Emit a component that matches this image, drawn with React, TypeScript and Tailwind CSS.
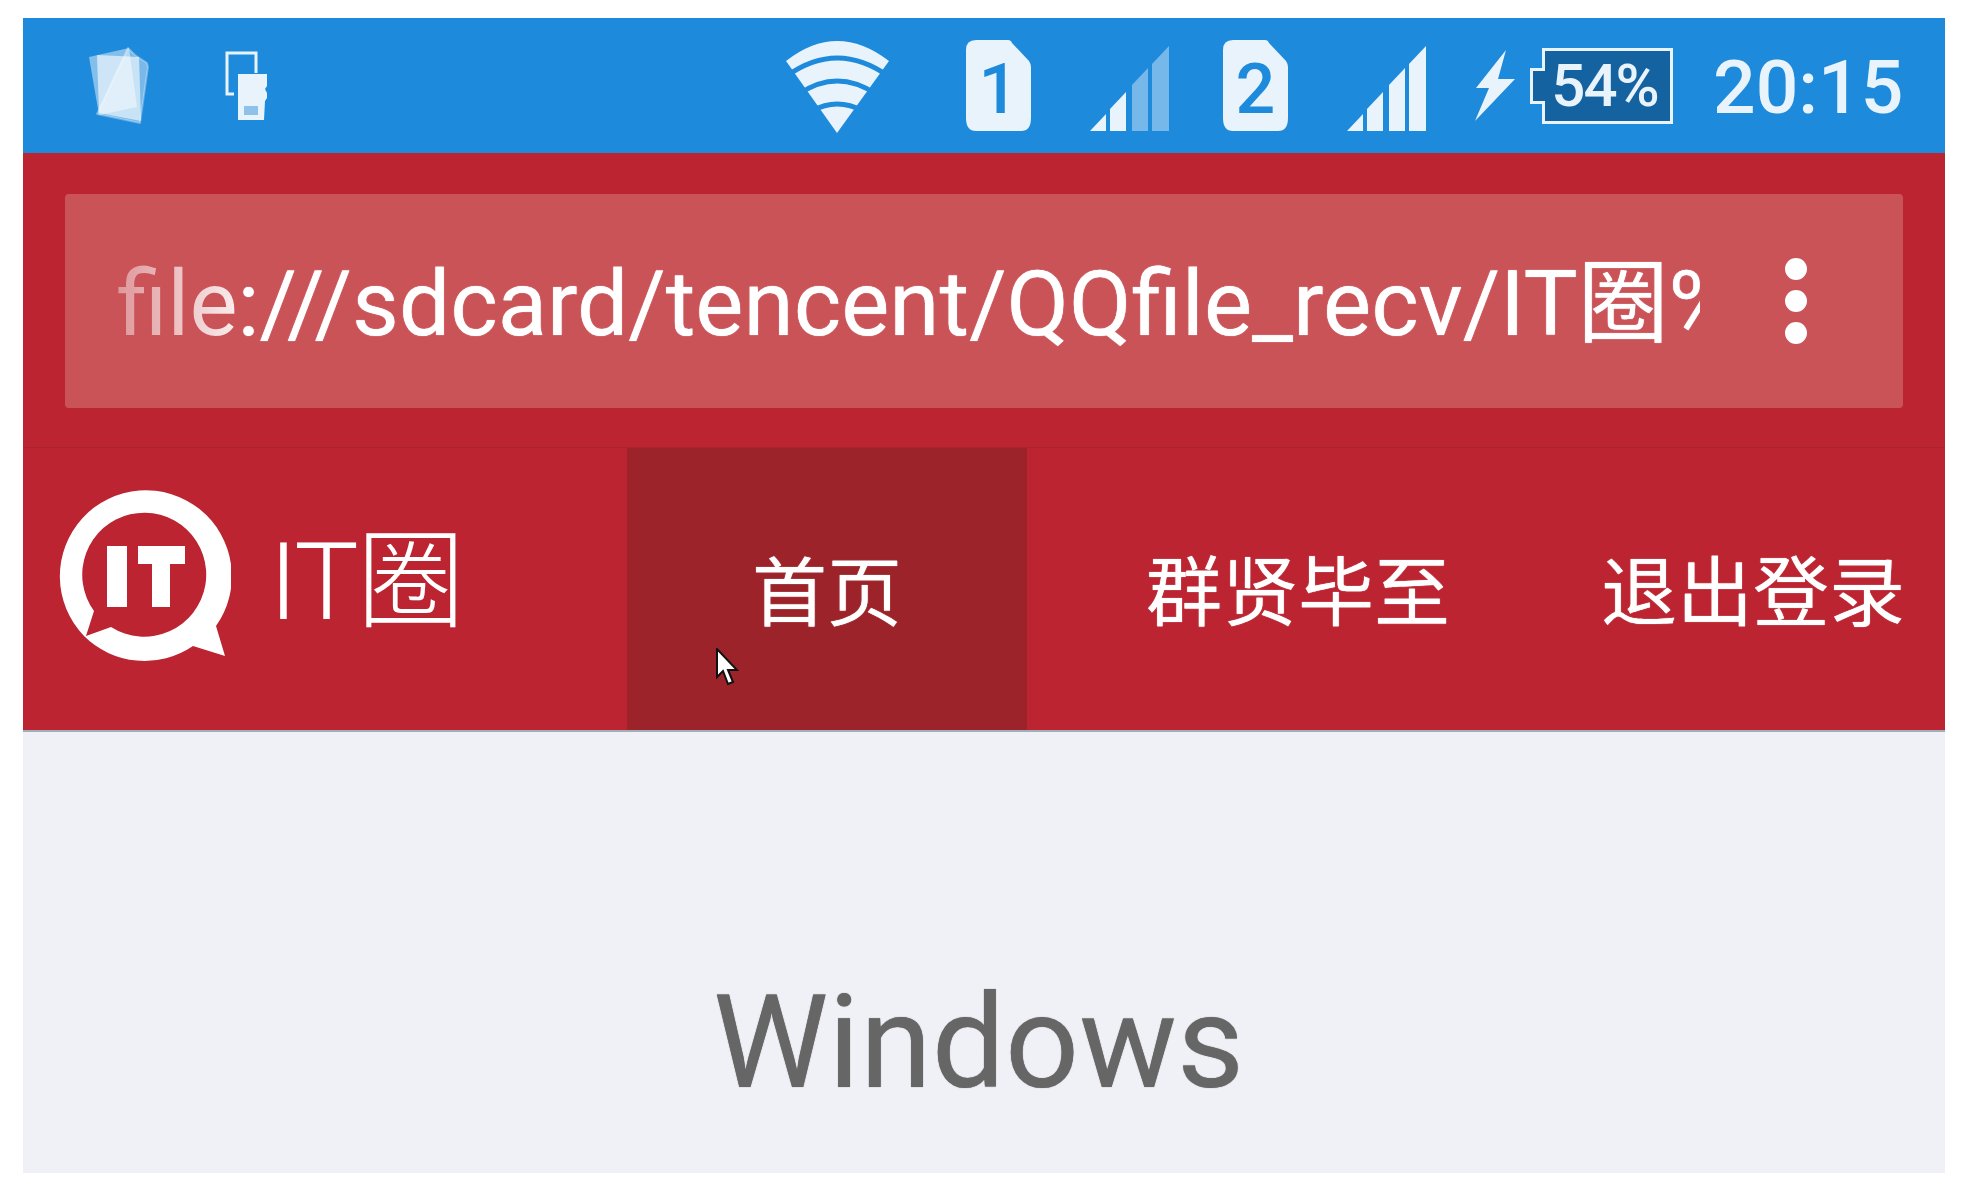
import React from 'react';

const sans = 'font-["Roboto","Noto_Sans_CJK_SC",sans-serif]';

const Cards = () => (
  <svg width="63" height="77" viewBox="0 0 63 77" className="shrink-0">
    <path d="M41 1 L48 8 L60 16 L61 20 L53 76 L10 67Z" fill="#fff" fillOpacity="0.4" stroke="#fff" strokeOpacity="0.3" strokeLinejoin="round" strokeWidth="2" />
    <path d="M2 10 L42 1 L50 60 L12 68Z" fill="#fff" fillOpacity="0.45" strokeLinejoin="round" />
    <path d="M10 8 L52 10 L54 74 L12 66Z" fill="#fff" fillOpacity="0.6" />
  </svg>
);

const DeviceCard = () => (
  <svg width="44" height="69" viewBox="0 0 44 69" className="shrink-0">
    <path d="M31 22 V2 H2 V43 H9" fill="none" stroke="#e8f3fb" strokeWidth="3" />
    <path d="M13 23 H42 V35 L40 38 L42 42 V47 L40 50 L39 69 H13Z" fill="#e8f3fb" />
    <rect x="19" y="55" width="14" height="9" fill="#8fc2ea" />
  </svg>
);

const Wifi = () => (
  <svg width="104" height="92" viewBox="0 0 104 92" className="shrink-0">
    <path d="M0 20 Q51 -20 103 20 L51 92Z" fill="#e8f3fb" strokeLinejoin="round" />
    <path d="M-2 37 Q51 -3 105 37" fill="none" stroke="#1e8adb" strokeWidth="5" />
    <path d="M13 53 Q51 27 90 53" fill="none" stroke="#1e8adb" strokeWidth="5" />
    <path d="M26 70 Q51 56 77 70" fill="none" stroke="#1e8adb" strokeWidth="5" />
  </svg>
);

const Sim = ({ n }: { n: string }) => (
  <div className="relative w-[65px] h-[91px] shrink-0">
    <svg width="65" height="91" viewBox="0 0 65 91" className="absolute inset-0">
      <path d="M10 0 H42 Q45 0 46 3 L63 21 Q65 24 65 27 V78 Q65 91 55 91 H10 Q0 91 0 78 V10 Q0 0 10 0Z" fill="#e8f3fb" />
    </svg>
    <span className={`absolute inset-0 flex items-center justify-center pt-[6px] text-[70px] leading-none text-[#1e8adb] font-medium ${sans}`}>
      {n}
    </span>
  </div>
);

const Signal = ({ dim }: { dim?: boolean }) => {
  const far = dim ? '#76b8ea' : '#e8f3fb';
  return (
    <svg width="80" height="85" viewBox="0 0 80 85" className="shrink-0">
      <path d="M0 85 L16 68 V85Z" fill="#e8f3fb" />
      <path d="M20 85 V63 L36 46 V85Z" fill="#e8f3fb" />
      <path d="M42 85 V39 L58 22 V85Z" fill={far} />
      <path d="M62 85 V18 L79 0 V85Z" fill={far} />
    </svg>
  );
};

const Bolt = () => (
  <svg width="40" height="71" viewBox="0 0 40 71" className="shrink-0">
    <path d="M31 0 L1 38 H14 L0 71 L40 29 H23Z" fill="#e8f3fb" />
  </svg>
);

const Battery = () => (
  <div className="relative w-[143px] h-[76px] shrink-0 pl-[12px]">
    <div className={`h-full w-full border-[3px] border-[#e8f3fb] bg-[#14629f] flex items-center justify-center pr-[6px] text-[60px] leading-none text-[#e8f3fb] font-medium tracking-[-2px] ${sans}`}>
      54%
    </div>
    <div className="absolute left-0 top-[20px] h-[36px] w-[15px] border-[3px] border-r-0 border-[#e8f3fb] bg-[#14629f]" />
  </div>
);

const LogoMark = () => (
  <svg width="172" height="172" viewBox="0 0 172 172" className="shrink-0">
    <path
      fillRule="evenodd"
      fill="#fff"
      d="M157 137 L166 167 L134 157 A86 86 0 0 1 25 147 A86 86 0 1 1 157 137Z M35 122 L27 147 L52 138 A62 62 0 1 0 35 122Z"
    />
    <path d="M48 57 H68 V118 H48Z M79 57 H126 V75 H111 V118 H93 V75 H79Z" fill="#fff" />
  </svg>
);

const Cursor = () => (
  <svg width="24" height="38" viewBox="0 0 24 38" className="absolute left-[88px] top-[200px]">
    <path d="M2 1 V29 L8 23 L13 36 L18 34 L13 22 L22 22Z" fill="#fff" stroke="#111" strokeWidth="2" />
  </svg>
);

export default function App() {
  return (
    <div className="w-[1966px] h-[1190px] bg-white pt-[18px] pl-[23px] overflow-hidden">
      <div className={`w-[1922px] h-[1155px] flex flex-col bg-[#f0f1f6] blur-[0.6px] ${sans}`}>
        {/* status bar */}
        <div className="h-[135px] bg-[#1e8adb] flex items-center pl-[64px]">
          <Cards />
          <div className="ml-[75px]"><DeviceCard /></div>
          <div className="ml-[517px] mt-[3px]"><Wifi /></div>
          <div className="ml-[76px]"><Sim n="1" /></div>
          <div className="ml-[59px] mt-[6px]"><Signal dim /></div>
          <div className="ml-[53px]"><Sim n="2" /></div>
          <div className="ml-[59px] mt-[6px]"><Signal /></div>
          <div className="ml-[48px]"><Bolt /></div>
          <div className="ml-[15px]"><Battery /></div>
          <span className="ml-[40px] mt-[3px] text-[75px] leading-none font-medium text-[#e8f3fb] whitespace-nowrap">20:15</span>
        </div>

        {/* url bar */}
        <div className="h-[295px] bg-[#bb2430] px-[42px] pt-[41px] border-b border-[#a9232c] box-border">
          <div className="h-[214px] bg-[#ca5358] rounded-[4px] flex items-center pl-[52px] relative">
            <div className="w-[1583px] overflow-hidden whitespace-nowrap text-[90.8px] leading-none mt-[6px] text-white [text-shadow:0_0_1px_#fff]">
              <span className="bg-gradient-to-r from-white/40 to-white/90 bg-clip-text text-transparent [text-shadow:none]">file</span>
              :///sdcard/tencent/QQfile_recv/IT圈%
            </div>
            <div className="ml-[85px] flex flex-col gap-[10px]">
              <div className="w-[22px] h-[22px] rounded-full bg-white" />
              <div className="w-[22px] h-[22px] rounded-full bg-white" />
              <div className="w-[22px] h-[22px] rounded-full bg-white" />
            </div>
          </div>
        </div>

        {/* nav */}
        <div className="h-[284px] bg-[#bb2430] border-b-2 border-[#9fb0b8] box-border flex items-stretch">
          <div className="w-[604px] flex items-center pl-[36px] shrink-0">
            <div className="-mt-[28px]"><LogoMark /></div>
            <span className="ml-[38px] text-[108px] leading-none font-light text-white whitespace-nowrap tracking-[-2px] -mt-[14px]">IT圈</span>
          </div>
          <div className="relative w-[400px] bg-[#9c2329] flex items-center justify-center text-[75px] text-white shrink-0 [text-shadow:0_0_1px_#fff]">
            <span className="mt-[10px]">首页</span>
            <Cursor />
          </div>
          <div className="ml-[119px] flex items-center text-[76px] text-white whitespace-nowrap [text-shadow:0_0_1px_#fff]">
            <span className="mt-[10px]">群贤毕至</span>
          </div>
          <div className="ml-[151px] flex items-center text-[76px] text-white whitespace-nowrap [text-shadow:0_0_1px_#fff]">
            <span className="mt-[10px]">退出登录</span>
          </div>
        </div>

        {/* content */}
        <div className="flex-1 flex justify-center pt-[246px] pr-[11px]">
          <span className="text-[130px] leading-none text-[#666666] [text-shadow:0_0_1px_#666666]">Windows</span>
        </div>
      </div>
    </div>
  );
}
